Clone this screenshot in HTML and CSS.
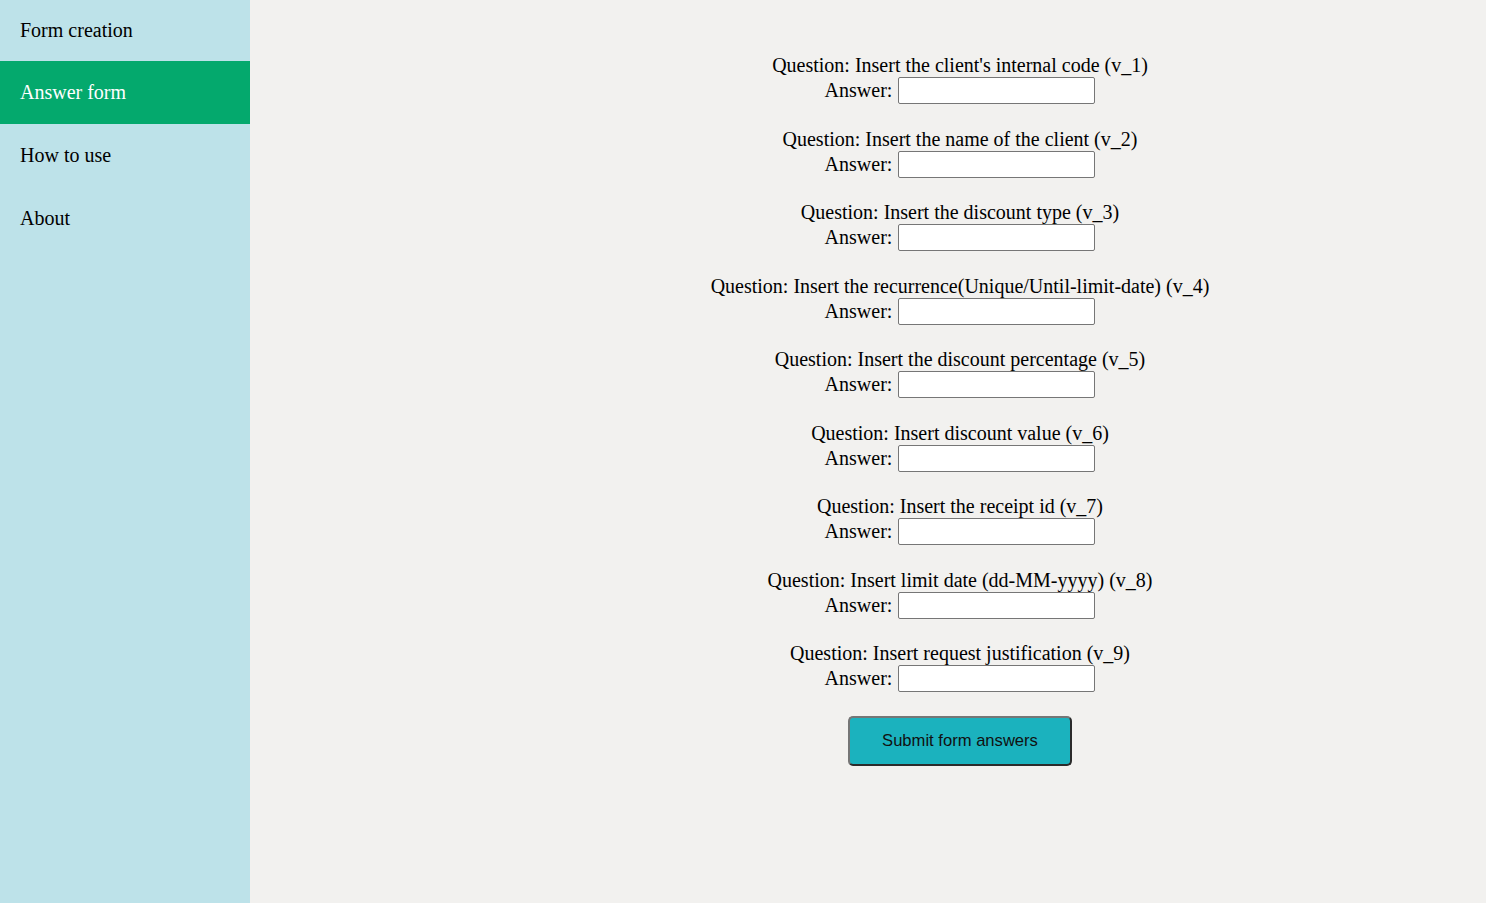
FILE: index.html
```html
<!DOCTYPE html>
<html lang="en">
<head>
<meta charset="utf-8">
<title>Answer form</title>
<link rel="stylesheet" href="styles.css">
</head>
<body>
<div class="layout">
  <nav class="sidebar">
    <a class="nav-item" href="#">Form creation</a>
    <a class="nav-item active" href="#">Answer form</a>
    <a class="nav-item" href="#">How to use</a>
    <a class="nav-item" href="#">About</a>
  </nav>
  <main class="main">
    <form class="form">
      <div class="field">
        <div class="question">Question: Insert the client's internal code (v_1)</div>
        <div class="answer"><label class="answer-label">Answer:</label><input class="answer-input" type="text"></div>
      </div>
      <div class="field">
        <div class="question">Question: Insert the name of the client (v_2)</div>
        <div class="answer"><label class="answer-label">Answer:</label><input class="answer-input" type="text"></div>
      </div>
      <div class="field">
        <div class="question">Question: Insert the discount type (v_3)</div>
        <div class="answer"><label class="answer-label">Answer:</label><input class="answer-input" type="text"></div>
      </div>
      <div class="field">
        <div class="question">Question: Insert the recurrence(Unique/Until-limit-date) (v_4)</div>
        <div class="answer"><label class="answer-label">Answer:</label><input class="answer-input" type="text"></div>
      </div>
      <div class="field">
        <div class="question">Question: Insert the discount percentage (v_5)</div>
        <div class="answer"><label class="answer-label">Answer:</label><input class="answer-input" type="text"></div>
      </div>
      <div class="field">
        <div class="question">Question: Insert discount value (v_6)</div>
        <div class="answer"><label class="answer-label">Answer:</label><input class="answer-input" type="text"></div>
      </div>
      <div class="field">
        <div class="question">Question: Insert the receipt id (v_7)</div>
        <div class="answer"><label class="answer-label">Answer:</label><input class="answer-input" type="text"></div>
      </div>
      <div class="field">
        <div class="question">Question: Insert limit date (dd-MM-yyyy) (v_8)</div>
        <div class="answer"><label class="answer-label">Answer:</label><input class="answer-input" type="text"></div>
      </div>
      <div class="field">
        <div class="question">Question: Insert request justification (v_9)</div>
        <div class="answer"><label class="answer-label">Answer:</label><input class="answer-input" type="text"></div>
      </div>
      <button class="submit" type="button">Submit form answers</button>
    </form>
  </main>
</div>
</body>
</html>
```
FILE: styles.css
```css
html, body {
  margin: 0;
  padding: 0;
  height: 100%;
}
body {
  font-family: "Liberation Serif", "Times New Roman", serif;
  font-size: 20px;
  color: #000;
  background: #f2f1ef;
}
.layout {
  display: flex;
  min-height: 100vh;
}
.sidebar {
  width: 250px;
  flex: 0 0 250px;
  background: #bde2e9;
  display: flex;
  flex-direction: column;
}
.nav-item {
  display: block;
  height: 63px;
  box-sizing: border-box;
  padding: 20px 20px 20px;
  line-height: 23px;
  font-size: 20px;
  color: #000;
  text-decoration: none;
}
.nav-item:first-child {
  height: 61px;
  padding-top: 19px;
}
.nav-item.active {
  background: #04a96d;
  color: #fff;
}
.main {
  flex: 1;
  box-sizing: border-box;
  padding: 54px 0 40px 184px;
}
.form {
  display: flex;
  flex-direction: column;
  align-items: center;
  gap: 23.5px;
}
.field {
  display: flex;
  flex-direction: column;
  align-items: center;
}
.question {
  line-height: 23px;
  white-space: nowrap;
}
.answer {
  display: flex;
  align-items: flex-start;
  gap: 6px;
}
.answer-label {
  line-height: 23px;
  padding-top: 2px;
}
.answer-input {
  width: 197px;
  height: 27px;
  box-sizing: border-box;
  margin: 0;
  border: 1px solid #767676;
  border-radius: 2px;
  background: #fff;
  font-size: 13px;
  padding: 1px 2px;
}
.submit {
  width: 224px;
  height: 50px;
  box-sizing: border-box;
  background: #1bb2be;
  border-style: solid;
  border-width: 2px;
  border-color: #767676 #2b2b2b #2b2b2b #767676;
  border-radius: 5px;
  font-family: "Liberation Sans", Arial, sans-serif;
  font-size: 16.6px;
  color: #111;
  cursor: pointer;
}
```
